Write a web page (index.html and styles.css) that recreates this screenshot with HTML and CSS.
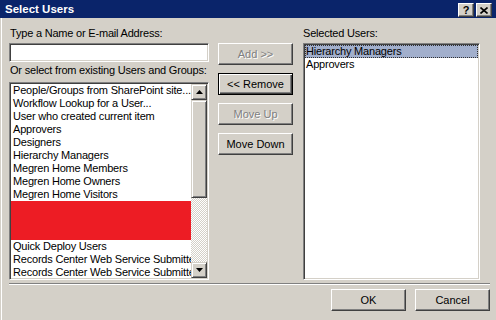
FILE: index.html
```html
<!DOCTYPE html>
<html lang="en">
<head>
  <meta charset="UTF-8" />
  <title>Select Users</title>
  <link rel="stylesheet" href="styles.css">
</head>
<body>

  <div class="window">
    <div class="titlebar">
      <span class="title">Select Users</span>
      <div class="caption-buttons">
        <span class="cap-btn cap-help">?</span>
        <span class="cap-btn">
          <svg width="8" height="7" viewBox="0 0 8 7">
            <path d="M0.5 0.5 L7.5 6.5 M7.5 0.5 L0.5 6.5" stroke="#000" stroke-width="1.6" fill="none"/>
          </svg>
        </span>
      </div>
    </div>

    <div class="content">
      <div class="columns">
        <div class="col col-left">
          <label class="lbl" for="name">Type a Name or E-mail Address:</label>
          <input class="field" type="text" id="name">
          <label class="lbl lbl-second">Or select from existing Users and Groups:</label>
          <div class="listbox groups">
            <ul class="items">
              <li>People/Groups from SharePoint site...</li>
              <li>Workflow Lookup for a User...</li>
              <li>User who created current item</li>
              <li>Approvers</li>
              <li>Designers</li>
              <li>Hierarchy Managers</li>
              <li>Megren Home Members</li>
              <li>Megren Home Owners</li>
              <li>Megren Home Visitors</li>
              <li class="redacted"></li>
              <li>Quick Deploy Users</li>
              <li>Records Center Web Service Submitters</li>
              <li>Records Center Web Service Submitters</li>
            </ul>
            <div class="scrollbar">
              <div class="sb-btn">
                <svg width="7" height="4" viewBox="0 0 7 4"><path d="M3.5 0 L7 4 L0 4 Z" fill="#000"/></svg>
              </div>
              <div class="sb-thumb"></div>
              <div class="sb-track"></div>
              <div class="sb-btn">
                <svg width="7" height="4" viewBox="0 0 7 4"><path d="M0 0 L7 0 L3.5 4 Z" fill="#000"/></svg>
              </div>
            </div>
          </div>
        </div>

        <div class="col col-buttons">
          <button class="btn" disabled>Add &gt;&gt;</button>
          <button class="btn btn-default">&lt;&lt; Remove</button>
          <button class="btn" disabled>Move Up</button>
          <button class="btn">Move Down</button>
        </div>

        <div class="col col-right">
          <label class="lbl">Selected Users:</label>
          <div class="listbox selected">
            <ul class="items">
              <li class="active">Hierarchy Managers</li>
              <li>Approvers</li>
            </ul>
          </div>
        </div>
      </div>

      <div class="separator"></div>

      <div class="footer">
        <button class="btn">OK</button>
        <button class="btn">Cancel</button>
      </div>
    </div>
  </div>

</body>
</html>
```

FILE: styles.css
```css
body {
  margin: 0;
  width: 496px;
  height: 320px;
  overflow: hidden;
  background: #d4d0c8;
  font-family: "Liberation Sans", Arial, sans-serif;
  font-size: 11px;
  letter-spacing: -0.2px;
  color: #000;
}

.window {
  height: 320px;
}

/* title bar */
.titlebar {
  height: 18px;
  background: #0a246a;
  display: flex;
  align-items: center;
  justify-content: space-between;
  padding: 0 4px 0 5px;
}

.title {
  color: #fff;
  font-weight: bold;
  font-size: 11.5px;
  letter-spacing: 0;
}

.caption-buttons {
  display: flex;
  gap: 2px;
  margin-top: 2px;
}

.cap-btn {
  width: 16px;
  height: 14px;
  box-sizing: border-box;
  background: #d4d0c8;
  border: 1px solid;
  border-color: #fff #404040 #404040 #fff;
  box-shadow: inset -1px -1px 0 #808080;
  display: flex;
  align-items: center;
  justify-content: center;
}

.cap-help {
  font-weight: bold;
  font-size: 11px;
  line-height: 12px;
}

/* main area */
.content {
  margin-left: 1px;
  height: 302px;
  box-shadow: inset 1px 0 0 #fff;
}

.columns {
  display: flex;
  padding-left: 8px;
  gap: 9px;
}

.col {
  display: flex;
  flex-direction: column;
}

.col-left {
  width: 200px;
  padding-top: 9px;
}

.col-buttons {
  width: 75px;
  padding-top: 25px;
  gap: 8px;
  margin-right: 1px;
}

.col-right {
  width: 177px;
  padding-top: 9px;
}

.lbl {
  display: block;
  height: 13px;
  line-height: 13px;
  padding-left: 1px;
  white-space: nowrap;
}

.col-right .lbl {
  padding-left: 0;
}

.lbl-second {
  margin-top: 2px;
}

.field {
  margin: 3px 0 0;
  width: 200px;
  height: 19px;
  box-sizing: border-box;
  background: #fff;
  border: 1px solid;
  border-color: #808080 #fff #fff #808080;
  box-shadow: inset 1px 1px 0 #404040, inset -1px -1px 0 #d4d0c8;
  padding: 0 3px;
  font: inherit;
}

/* list boxes */
.listbox {
  display: flex;
  box-sizing: border-box;
  background: #fff;
  border: 1px solid;
  border-color: #808080 #fff #fff #808080;
  box-shadow: inset 1px 1px 0 #404040, inset -1px -1px 0 #d4d0c8;
  padding: 1px;
  overflow: hidden;
}

.groups {
  margin-top: 5px;
  height: 198px;
}

.selected {
  margin-top: 3px;
  height: 237px;
}

.items {
  flex: 1;
  min-width: 0;
  list-style: none;
  margin: 0;
  padding: 0;
  overflow: hidden;
}

.items li {
  height: 13px;
  line-height: 13px;
  padding-left: 2px;
  white-space: nowrap;
  overflow: hidden;
}

.items li.redacted {
  height: 39px;
  background: #ed1c24;
}

.items li.active {
  background: #a2afcc;
  outline: 1px dotted #303030;
  outline-offset: -1px;
}

.selected .items li {
  padding-left: 1px;
}

/* scrollbar */
.scrollbar {
  width: 16px;
  display: flex;
  flex-direction: column;
  background: repeating-conic-gradient(#fff 0 25%, #d4d0c8 0 50%) 0 0 / 2px 2px;
}

.sb-btn,
.sb-thumb {
  box-sizing: border-box;
  background: #d4d0c8;
  border: 1px solid;
  border-color: #d4d0c8 #404040 #404040 #d4d0c8;
  box-shadow: inset 1px 1px 0 #fff, inset -1px -1px 0 #808080;
}

.sb-btn {
  height: 16px;
  display: flex;
  align-items: center;
  justify-content: center;
}

.sb-thumb {
  height: 98px;
}

.sb-track {
  flex: 1;
}

/* push buttons */
.btn {
  width: 75px;
  height: 22px;
  box-sizing: border-box;
  background: #d4d0c8;
  border: 1px solid;
  border-color: #fff #404040 #404040 #fff;
  box-shadow: inset -1px -1px 0 #808080;
  font: inherit;
  color: #000;
  padding: 0;
}

.btn:disabled {
  color: #808080;
  text-shadow: 1px 1px 0 #fff;
}

.btn-default {
  border-color: #000;
  box-shadow: inset 1px 1px 0 #fff, inset -1px -1px 0 #404040, inset -2px -2px 0 #808080;
}

.separator {
  margin: 3px 6px 0 8px;
  border-top: 1px solid #808080;
  border-bottom: 1px solid #fff;
  height: 0;
}

.footer {
  display: flex;
  justify-content: flex-end;
  gap: 9px;
  margin-top: 4px;
  padding-right: 6px;
}
```
